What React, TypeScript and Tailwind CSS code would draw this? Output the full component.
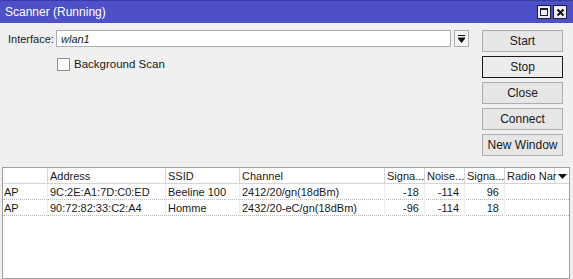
const COLS = 'grid grid-cols-[45px_118px_74px_145px_40px_40px_40px_50px_1fr]'

const ROWS = [
  { type: 'AP', address: '9C:2E:A1:7D:C0:ED', ssid: 'Beeline 100', channel: '2412/20/gn(18dBm)', signal: '-18', noise: '-114', snr: '96' },
  { type: 'AP', address: '90:72:82:33:C2:A4', ssid: 'Homme', channel: '2432/20-eC/gn(18dBm)', signal: '-96', noise: '-114', snr: '18' },
]

const BUTTONS = ['Start', 'Stop', 'Close', 'Connect', 'New Window']

function TitleBar() {
  return (
    <div className="flex h-[23px] items-center justify-between border-t border-[#3a3da8] bg-[#4d50c6] pl-[5px] pr-[6px]">
      <span className="text-[12px] text-white">Scanner (Running)</span>
      <div className="flex gap-[2px]">
        <div className="flex h-[14px] w-[14px] items-center justify-center border border-[#1c1c3c] bg-[#eceef4]">
          <div className="h-[8px] w-[8px] border border-t-2 border-[#1c1c3c]" />
        </div>
        <div className="flex h-[14px] w-[14px] items-center justify-center border border-[#1c1c3c] bg-[#eceef4]">
          <svg width="9" height="9" viewBox="0 0 9 9">
            <path d="M1.5 1.5 L7.5 7.5 M7.5 1.5 L1.5 7.5" stroke="#111" strokeWidth="2" />
          </svg>
        </div>
      </div>
    </div>
  )
}

function ScanTable() {
  return (
    <div className="ml-[2px] mr-[3px] flex-1 border border-[#a0a0a0] bg-white">
      <div className={`${COLS} h-[16px] border-b border-[#d5d5d5] text-[#1a1a1a]`}>
        <div className="border-r border-[#d5d5d5]" />
        <div className="border-r border-[#d5d5d5] pl-[2px]">Address</div>
        <div className="border-r border-[#d5d5d5] pl-[2px]">SSID</div>
        <div className="border-r border-[#d5d5d5] pl-[2px]">Channel</div>
        <div className="border-r border-[#d5d5d5] pl-[2px]">Signa...</div>
        <div className="border-r border-[#d5d5d5] pl-[2px]">Noise...</div>
        <div className="border-r border-[#d5d5d5] pl-[2px]">Signa...</div>
        <div className="whitespace-nowrap border-r border-[#d5d5d5] pl-[2px]">Radio Nar</div>
        <div className="flex items-center justify-center">
          <svg width="9" height="5" viewBox="0 0 9 5">
            <path d="M0 0 H9 L4.5 5 Z" fill="#111" />
          </svg>
        </div>
      </div>
      {ROWS.map((r) => (
        <div key={r.address} className={`${COLS} h-[16px] border-b border-dotted border-[#b8b8b8] text-[#1a1a1a]`}>
          <div className="border-r border-[#ececec] pl-[1px]">{r.type}</div>
          <div className="border-r border-[#ececec] pl-[2px]">{r.address}</div>
          <div className="border-r border-[#ececec] pl-[2px]">{r.ssid}</div>
          <div className="border-r border-[#ececec] pl-[2px]">{r.channel}</div>
          <div className="border-r border-[#ececec] pr-[5px] text-right">{r.signal}</div>
          <div className="border-r border-[#ececec] pr-[5px] text-right">{r.noise}</div>
          <div className="border-r border-[#ececec] pr-[5px] text-right">{r.snr}</div>
          <div />
          <div />
        </div>
      ))}
    </div>
  )
}

export default function App() {
  return (
    <div className="flex h-[279px] w-[573px] flex-col overflow-hidden bg-[#f0f0f0] font-['Liberation_Sans',Arial,sans-serif] text-[11px] leading-[16px]">
      <TitleBar />
      <div className="flex pt-[7px] pl-[8px] pr-[10px]">
        <div className="flex-1">
          <div className="flex items-center">
            <span className="w-[48px] whitespace-nowrap text-[11px] text-[#1a1a1a]">Interface:</span>
            <div className="flex h-[17px] w-[395px] items-center border border-[#abadb3] bg-white pl-[4px] italic text-[#1a1a1a]">
              wlan1
            </div>
            <div className="ml-[3px] flex h-[17px] w-[15px] items-center justify-center border border-[#abadb3] bg-[#f4f4f4]">
              <svg width="7" height="8" viewBox="0 0 7 8">
                <path d="M0 0.5 H7 M0 3 H7 L3.5 7.5 Z" stroke="#111" strokeWidth="1" fill="#111" />
              </svg>
            </div>
          </div>
          <label className="ml-[49px] mt-[9px] flex items-center gap-[4px] text-[11.5px] text-[#1a1a1a]">
            <span className="h-[13px] w-[13px] border border-[#8e8f8f] bg-white" />
            Background Scan
          </label>
        </div>
        <div className="flex w-[81px] flex-col gap-[4px]">
          {BUTTONS.map((b) => (
            <button
              key={b}
              className={`h-[22px] text-[12px] text-[#1a1a1a] ${
                b === 'Stop' ? 'border border-[#1a1a1a] bg-[#ececec]' : 'border border-[#adadad] bg-[#e6e6e6]'
              }`}
            >
              {b}
            </button>
          ))}
        </div>
      </div>
      <div className="mt-[11px] flex flex-1 flex-col">
        <ScanTable />
      </div>
    </div>
  )
}
